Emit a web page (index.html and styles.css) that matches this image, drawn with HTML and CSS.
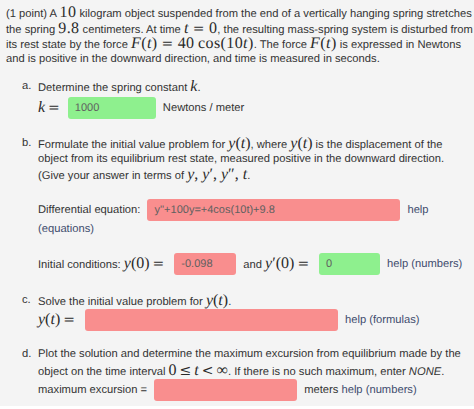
FILE: index.html
```html
<!DOCTYPE html>
<html>
<head>
<meta charset="utf-8">
<link rel="stylesheet" href="styles.css">
</head>
<body>
<div class="page">
  <p class="intro">
    <span class="ln">(1 point) A <span class="m">10</span> kilogram object suspended from the end of a vertically hanging spring stretches</span>
    <span class="ln">the spring <span class="m">9.8</span> centimeters. At time <span class="m"><i>t</i><span class="eq">=</span>0</span>, the resulting mass-spring system is disturbed from</span>
    <span class="ln">its rest state by the force <span class="m"><i>F</i>(<i>t</i>)<span class="eq">=</span>40&thinsp;cos(10<i>t</i>)</span>. The force <span class="m"><i>F</i>(<i>t</i>)</span> is expressed in Newtons</span>
    <span class="ln">and is positive in the downward direction, and time is measured in seconds.</span>
  </p>

  <div class="item item-a">
    <span class="lbl">a.</span>
    <div class="body">
      <span class="ln">Determine the spring constant <span class="m"><i>k</i></span>.</span>
      <div class="row row-k">
        <span class="m"><i>k</i><span class="eq">=</span></span>
        <span class="field ok w-k">1000</span>
        <span>Newtons / meter</span>
      </div>
    </div>
  </div>

  <div class="item item-b">
    <span class="lbl">b.</span>
    <div class="body">
      <span class="ln">Formulate the initial value problem for <span class="m"><i>y</i>(<i>t</i>)</span>, where <span class="m"><i>y</i>(<i>t</i>)</span> is the displacement of the</span>
      <span class="ln">object from its equilibrium rest state, measured positive in the downward direction.</span>
      <span class="ln">(Give your answer in terms of <span class="m"><i>y</i>, <i>y</i>&prime;, <i>y</i>&Prime;, <i>t</i></span>.</span>
      <div class="row row-de">
        <span>Differential equation:</span>
        <span class="field bad w-de">y''+100y=+4cos(10t)+9.8</span>
        <a class="help">help</a>
      </div>
      <span class="ln ln-eq"><a class="help">(equations)</a></span>
      <div class="row row-ic">
        <span>Initial conditions: <span class="m"><i>y</i>(0)<span class="eq">=</span></span></span>
        <span class="field bad w-y0">-0.098</span>
        <span>and <span class="m"><i>y</i>&prime;(0)<span class="eq">=</span></span></span>
        <span class="field ok w-yp">0</span>
        <a class="help">help (numbers)</a>
      </div>
    </div>
  </div>

  <div class="item item-c">
    <span class="lbl">c.</span>
    <div class="body">
      <span class="ln">Solve the initial value problem for <span class="m"><i>y</i>(<i>t</i>)</span>.</span>
      <div class="row row-yt">
        <span class="m"><i>y</i>(<i>t</i>)<span class="eq">=</span></span>
        <span class="field bad w-yt"></span>
        <a class="help">help (formulas)</a>
      </div>
    </div>
  </div>

  <div class="item item-d">
    <span class="lbl">d.</span>
    <div class="body">
      <span class="ln">Plot the solution and determine the maximum excursion from equilibrium made by the</span>
      <span class="ln">object on the time interval <span class="m">0<span class="eq">&le;</span><i>t</i><span class="eq">&lt;</span>&infin;</span>. If there is no such maximum, enter <em>NONE</em>.</span>
      <div class="row row-mx">
        <span>maximum excursion =</span>
        <span class="field bad w-mx"></span>
        <span>meters <a class="help">help (numbers)</a></span>
      </div>
    </div>
  </div>
</div>
</body>
</html>
```

FILE: styles.css
```css
* { box-sizing: border-box; }
html, body { margin: 0; padding: 0; background: #ffffff; }
body { overflow: hidden; }

.page {
  height: 406px;
  background: #f4f4f4;
  padding: 5px 0 0 6px;
  font-family: "Liberation Sans", Arial, sans-serif;
  font-size: 11.2px;
  color: #333333;
  overflow: hidden;
  text-rendering: geometricPrecision;
}

.intro { margin: 0; }

.ln {
  display: block;
  white-space: nowrap;
  height: 15.6px;
  line-height: 15.6px;
}

.m {
  font-family: "Liberation Serif", "DejaVu Serif", serif;
  font-size: 16px;
  line-height: 1;
  color: #2a2a2a;
}
.m i { font-style: italic; }
.eq {
  font-family: "DejaVu Serif", serif;
  font-size: 14px;
  font-weight: 300;
  margin: 0 3px;
}
.intro .m { letter-spacing: 0.4px; }
.intro .eq { margin: 0 4px; }

.item { display: flex; margin-left: 16px; }
.lbl { width: 16px; flex: none; line-height: 15.6px; }
.body { flex: 1; min-width: 0; }

.item-a { margin-top: 12px; }
.item-b { margin-top: 17px; }
.item-c { margin-top: 18px; }
.item-d { margin-top: 16.5px; }

.row {
  display: flex;
  align-items: center;
  gap: 7px;
  white-space: nowrap;
  height: 22px;
}
.row-k { margin-top: 2px; gap: 5px; }
.row-k .field { margin-right: 2px; }
.row-de { margin-top: 16px; }
.ln-eq { margin-top: 1px; }
.row-ic { margin-top: 16px; }
.row-yt { margin-top: 0; }
.row-mx { margin-top: 0.5px; }

.field {
  display: flex;
  align-items: center;
  height: 22px;
  border-radius: 3px;
  padding: 0 7px;
  font-size: 11px;
  color: #606060;
}
.ok { background: #8ef08e; }
.bad { background: #f98e8e; }

.w-k { width: 88px; }
.w-de { width: 253px; }
.w-y0 { width: 62px; }
.w-yp { width: 61px; }
.w-yt { width: 253px; }
.w-mx { width: 143px; }

.help { color: #3f4d6e; }
```
